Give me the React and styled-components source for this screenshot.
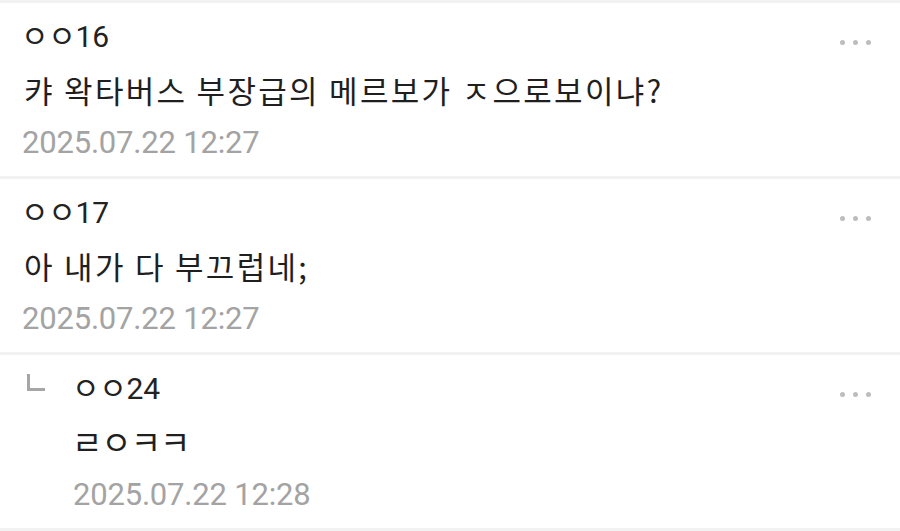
import React from 'react'
import styled, {createGlobalStyle} from 'styled-components'

const GlobalStyle = createGlobalStyle`
  html, body {
    margin: 0;
    padding: 0;
    background: #ffffff;
  }
  body {
    font-family: Roboto, "Noto Sans CJK KR", sans-serif;
  }
`

const comments = [
  {id: 1, name: 'ㅇㅇ16', text: '캬 왁타버스 부장급의 메르보가 ㅈ으로보이냐?', date: '2025.07.22 12:27'},
  {id: 2, name: 'ㅇㅇ17', text: '아 내가 다 부끄럽네;', date: '2025.07.22 12:27'},
  {id: 3, name: 'ㅇㅇ24', text: 'ㄹㅇㅋㅋ', date: '2025.07.22 12:28', reply: true, jamo: true},
]

const CommentList = () => {
  return (
    <List>
      {comments.map(c => (
        <Item key={c.id}>
          {c.reply && <ReplyCol><ReplyMark/></ReplyCol>}
          <Body>
            <Name>{c.name}</Name>
            <Text $jamo={c.jamo}>{c.text}</Text>
            <DateLine>{c.date}</DateLine>
          </Body>
          <More>
            <Dot/><Dot/><Dot/>
          </More>
        </Item>
      ))}
    </List>
  )
}

const App = () => (
  <>
    <GlobalStyle/>
    <CommentList/>
  </>
)

const List = styled.div`
  width: 900px;
  height: 531px;
  overflow: hidden;
  background: #fff;
  border-top: 3px solid #f2f2f2;
`

const Item = styled.div`
  display: flex;
  align-items: flex-start;
  padding: 7px 29px 7px 24px;
  border-bottom: 3px solid #f2f2f2;
`

const ReplyCol = styled.div`
  width: 51px;
  flex-shrink: 0;
  padding: 12px 0 0 3px;
  box-sizing: border-box;
`

const ReplyMark = styled.div`
  width: 15px;
  height: 14px;
  border-left: 3px solid #a6a6a6;
  border-bottom: 3px solid #a6a6a6;
`

const Body = styled.div`
  flex: 1;
  min-width: 0;
`

const Name = styled.div`
  font-family: Roboto, "Noto Sans CJK KR", sans-serif;
  font-size: 30px;
  line-height: 53px;
  height: 53px;
  color: #222;
  letter-spacing: -0.3px;
  margin-left: -3px;
`

const Text = styled.div`
  font-family: "Noto Sans CJK KR", sans-serif;
  font-size: ${p => (p.$jamo ? '33px' : '31px')};
  line-height: 53px;
  height: 53px;
  color: #1f1f1f;
  letter-spacing: ${p => (p.$jamo ? '-1px' : '2.3px')};
  margin-left: ${p => (p.$jamo ? '-3px' : '0')};
`

const DateLine = styled.div`
  font-family: Roboto, sans-serif;
  font-size: 31px;
  line-height: 53px;
  color: #a3a3a3;
  letter-spacing: -0.2px;
  margin-left: -2px;
`

const More = styled.div`
  display: flex;
  gap: 8px;
  padding-top: 30px;
`

const Dot = styled.span`
  width: 5px;
  height: 5px;
  border-radius: 50%;
  background: #bdbdbd;
`

export default App
